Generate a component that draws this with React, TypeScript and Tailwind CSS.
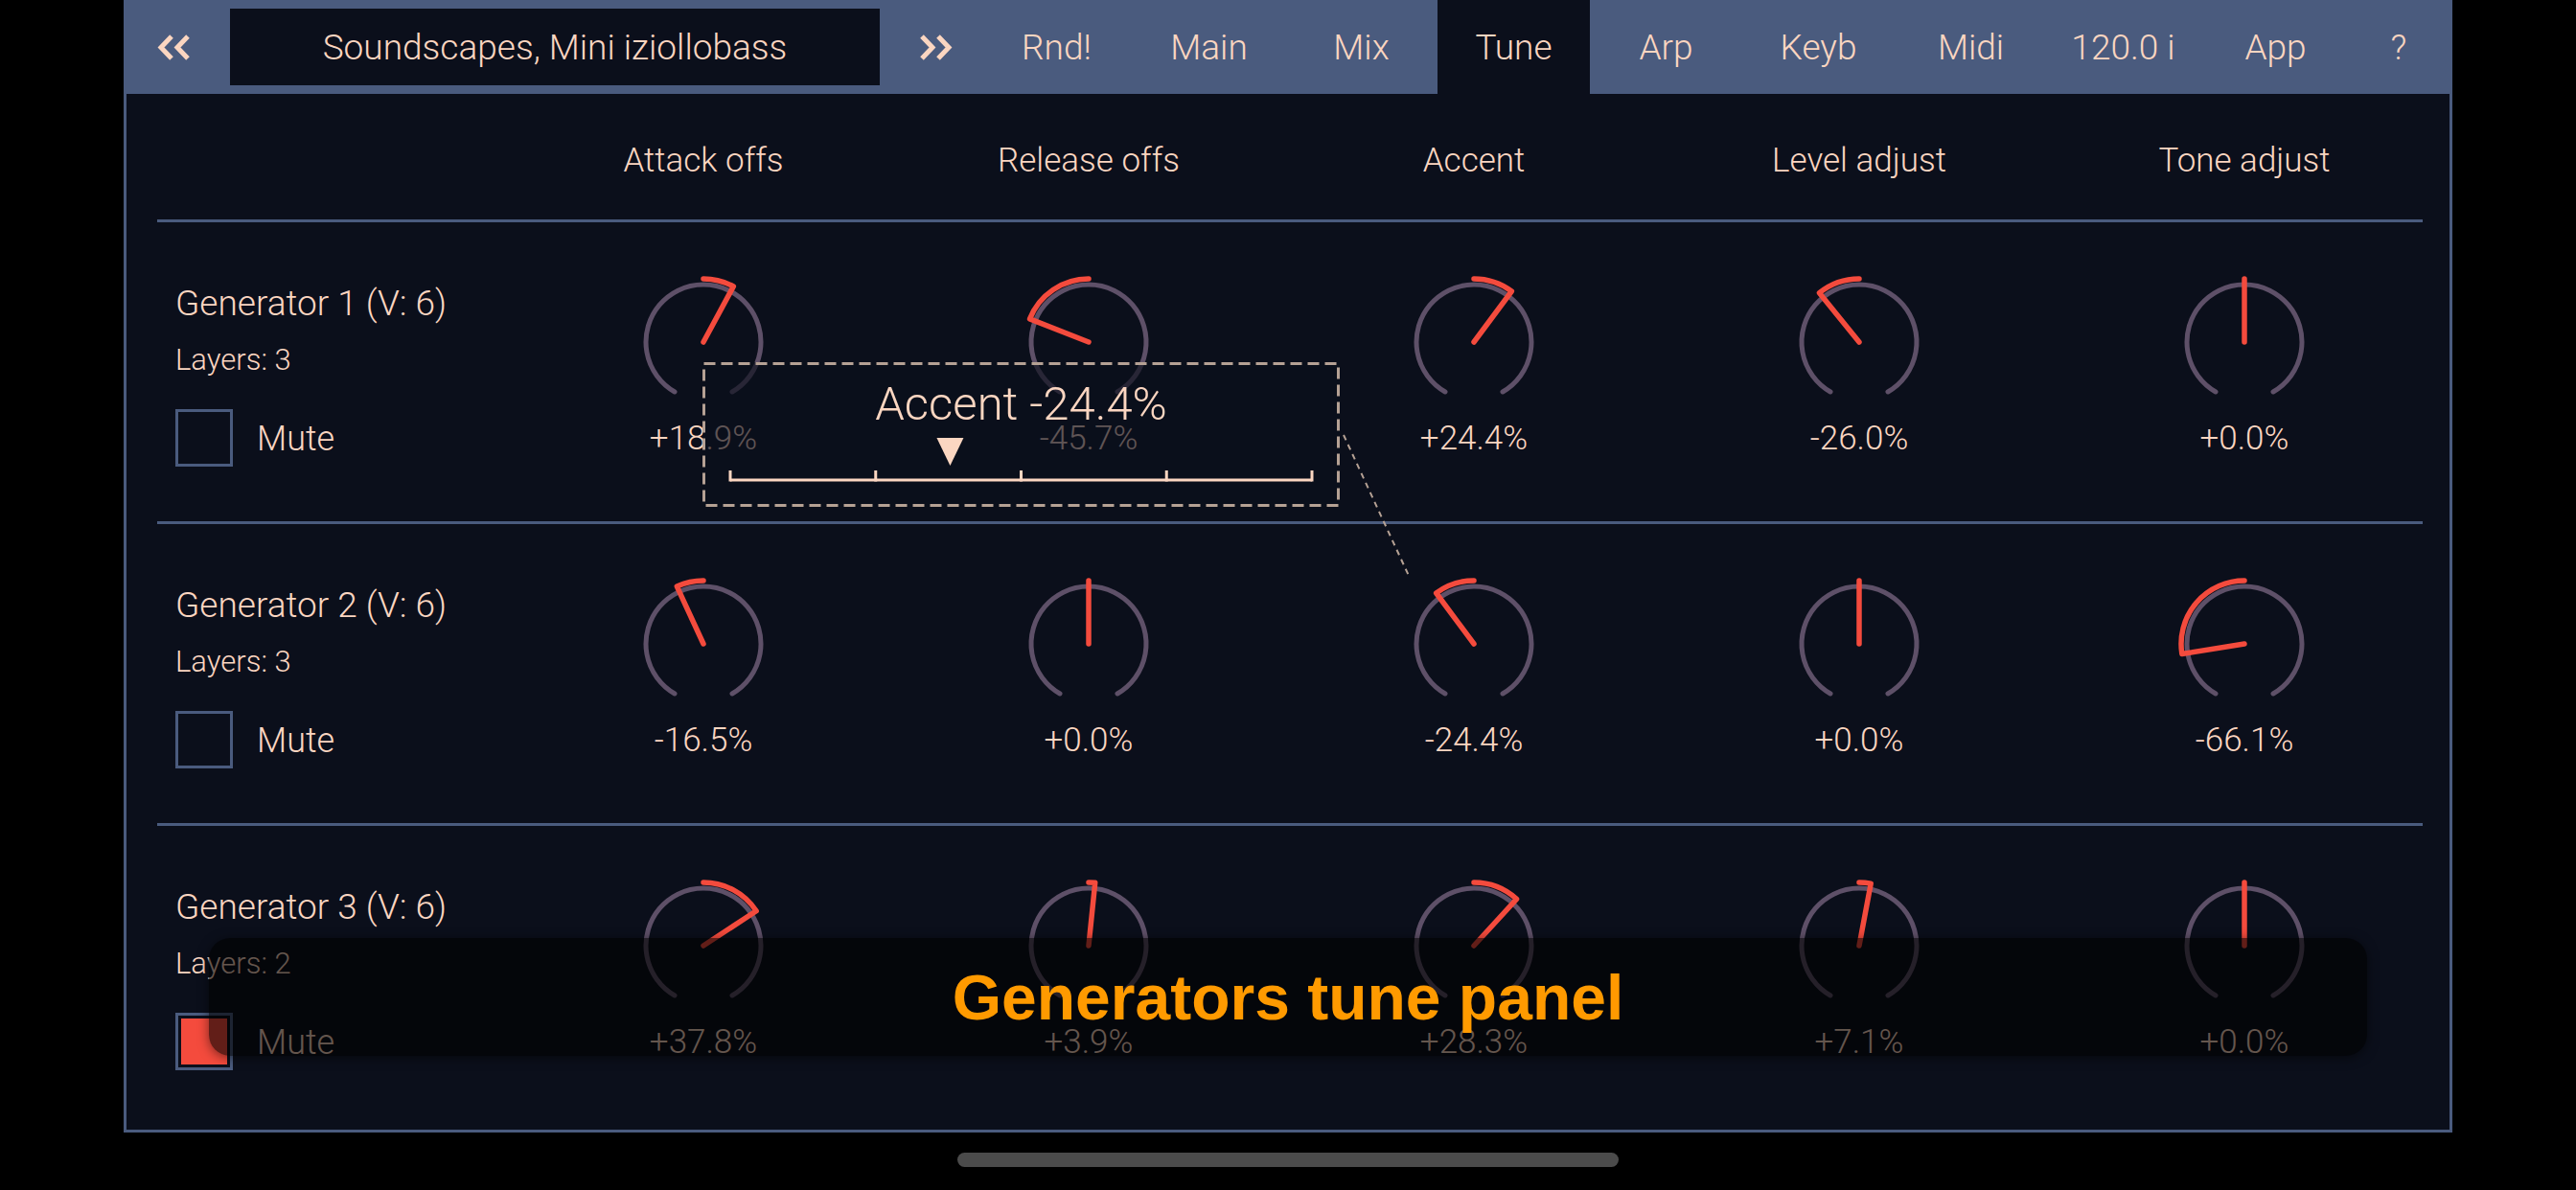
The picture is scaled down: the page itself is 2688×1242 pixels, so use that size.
import React from 'react';

type GeneratorRow = {
  name: string;
  layers: number;
  muted: boolean;
  values: number[];
};

const columns = ['Attack offs', 'Release offs', 'Accent', 'Level adjust', 'Tone adjust'];

const generators: GeneratorRow[] = [
  { name: 'Generator 1 (V: 6)', layers: 3, muted: false, values: [18.9, -45.7, 24.4, -26.0, 0] },
  { name: 'Generator 2 (V: 6)', layers: 3, muted: false, values: [-16.5, 0, -24.4, 0, -66.1] },
  { name: 'Generator 3 (V: 6)', layers: 2, muted: true, values: [37.8, 3.9, 28.3, 7.1, 0] },
];

const tabs = ['Rnd!', 'Main', 'Mix', 'Tune', 'Arp', 'Keyb', 'Midi', '120.0 i', 'App'];

const fmt = (v: number) => (v >= 0 ? `+${v.toFixed(1)}%` : `${v.toFixed(1)}%`);

// knob: grey track from -150deg to +150deg, red pointer + arc from 12 o'clock to the value
function Knob({ value }: { value: number }) {
  const c = 75;
  const pt = (deg: number, r: number) => {
    const a = (deg * Math.PI) / 180;
    return [c + r * Math.sin(a), c - r * Math.cos(a)];
  };
  const [sx, sy] = pt(-150, 60);
  const [ex, ey] = pt(150, 60);
  const deg = (value / 100) * 150;
  const [px, py] = pt(deg, 66);
  const [tx, ty] = pt(0, 66);
  const pointer =
    deg === 0
      ? `M ${c} ${c} L ${tx} ${ty}`
      : `M ${c} ${c} L ${px} ${py} A 66 66 0 0 ${deg > 0 ? 0 : 1} ${tx} ${ty}`;

  return (
    <svg width="150" height="150" viewBox="0 0 150 150">
      <path d={`M ${sx} ${sy} A 60 60 0 1 1 ${ex} ${ey}`} fill="none" stroke="#5e5068" strokeWidth="5" strokeLinecap="round" />
      <path d={pointer} fill="none" stroke="#f44b3d" strokeWidth="5.5" strokeLinecap="round" strokeLinejoin="round" />
    </svg>
  );
}

function Chevrons({ dir }: { dir: 'left' | 'right' }) {
  const pts =
    dir === 'left'
      ? ['16,2 5,13.5 16,25', '33,2 22,13.5 33,25']
      : ['3,2 14,13.5 3,25', '20,2 31,13.5 20,25'];
  return (
    <svg width="36" height="27" viewBox="0 0 36 27">
      {pts.map((p) => (
        <polyline key={p} points={p} fill="none" stroke="#fbd6c1" strokeWidth="5" />
      ))}
    </svg>
  );
}

function Checkbox({ checked }: { checked: boolean }) {
  return (
    <div className="w-[60px] h-[60px] border-[3px] border-[#4a5b7e] p-[3px]">
      {checked && <div className="w-full h-full bg-[#f44b3d]" />}
    </div>
  );
}

export default function App() {
  const accent = -24.4;
  const markerX = 7 + 303.5 + (accent / 100) * 303.5;

  return (
    <div className="relative w-[2688px] h-[1242px] bg-black overflow-hidden font-['Roboto',sans-serif] font-light text-[#fbd6c1]">
      <div className="mx-auto w-[2430px] h-[1182px] border-x-[3px] border-b-[3px] border-[#4a5b7e] bg-[#0b0f1b] flex flex-col">
        {/* Top bar */}
        <div className="h-[98px] bg-[#4a5b7e] flex items-stretch shrink-0">
          <div className="w-[108px] flex items-center justify-center pr-[10px]">
            <Chevrons dir="left" />
          </div>
          <div className="w-[678px] py-[9px]">
            <div className="h-full bg-[#0b0f1b] flex items-center justify-center text-[37px] leading-none">
              Soundscapes, Mini iziollobass
            </div>
          </div>
          <div className="w-[105px] flex items-center justify-center pl-[13px]">
            <Chevrons dir="right" />
          </div>
          {tabs.map((t) => (
            <div
              key={t}
              className={
                t === 'Tune'
                  ? 'w-[159px] flex items-center justify-center text-[37px] leading-none bg-[#0b0f1b]'
                  : 'w-[159px] flex items-center justify-center text-[37px] leading-none'
              }
            >
              {t}
            </div>
          ))}
          <div className="flex-1 flex items-center justify-center text-[37px] leading-none pr-[4px]">?</div>
        </div>

        <div className="pl-[32px] pr-[28px] flex flex-col">
          {/* column captions */}
          <div className="h-[131px] flex items-start pt-[52px]">
            <div className="w-[369px] shrink-0" />
            {columns.map((c) => (
              <div key={c} className="w-[402px] shrink-0 text-center text-[35px] leading-none">
                {c}
              </div>
            ))}
          </div>
          <div className="h-[3px] bg-[#4a5b7e]" />

          {generators.map((g, i) => (
            <React.Fragment key={g.name}>
              <div className="h-[312px] flex">
                <div className="w-[369px] shrink-0 pl-[19px] pt-[66px] flex flex-col">
                  <div className="text-[37px] leading-none">{g.name}</div>
                  <div className="mt-[25px] text-[31px] leading-none">Layers: {g.layers}</div>
                  <div className="mt-[36px] flex items-center gap-[25px]">
                    <Checkbox checked={g.muted} />
                    <span className="text-[36px] leading-none pt-[2px]">Mute</span>
                  </div>
                </div>
                {g.values.map((v, j) => (
                  <div key={j} className="w-[402px] shrink-0 flex flex-col items-center pt-[50px]">
                    <Knob value={v} />
                    <div className="mt-[8px] text-[35px] leading-none">{fmt(v)}</div>
                  </div>
                ))}
              </div>
              {i < generators.length - 1 && <div className="h-[3px] bg-[#4a5b7e]" />}
            </React.Fragment>
          ))}
        </div>
      </div>

      {/* home indicator */}
      <div className="mt-[21px] mx-auto w-[690px] h-[15px] rounded-full bg-[#4b4b4b]" />

      {/* value popup for the knob being dragged */}
      <div className="absolute left-[733px] top-[378px] w-[665px] h-[151px] bg-[#0b0f1b]/65 flex flex-col items-center pt-[19px]">
        <svg className="absolute inset-0" width="665" height="151">
          <rect x="1.5" y="1.5" width="662" height="148" fill="none" stroke="#b5a194" strokeWidth="3" strokeDasharray="12 6" />
        </svg>
        <div className="text-[49px] leading-none">Accent {fmt(accent)}</div>
        <svg className="mt-[11px]" width="621" height="48" viewBox="0 0 621 48">
          <polygon points={`${markerX - 14},0 ${markerX + 14},0 ${markerX},29`} fill="#fbd6c1" />
          <line x1="7" y1="44" x2="614" y2="44" stroke="#fbd6c1" strokeWidth="3" />
          {[0, 1, 2, 3, 4].map((k) => (
            <line key={k} x1={7 + k * 151.75} y1="34" x2={7 + k * 151.75} y2="45.5" stroke="#fbd6c1" strokeWidth="3" />
          ))}
        </svg>
      </div>
      <svg className="absolute left-[1395px] top-[448px]" width="90" height="165">
        <line x1="7" y1="6" x2="76" y2="155" stroke="#b5a194" strokeWidth="2" strokeDasharray="6 5" />
      </svg>

      {/* caption */}
      <div className="absolute left-[218px] top-[979px] w-[2252px] h-[123px] rounded-[22px] bg-black/60 shadow-[0_2px_12px_rgba(0,0,0,0.5)] flex items-center justify-center">
        <span className="font-['Liberation_Sans',sans-serif] font-bold text-[66px] leading-none text-[#ff9a00]">
          Generators tune panel
        </span>
      </div>
    </div>
  );
}
